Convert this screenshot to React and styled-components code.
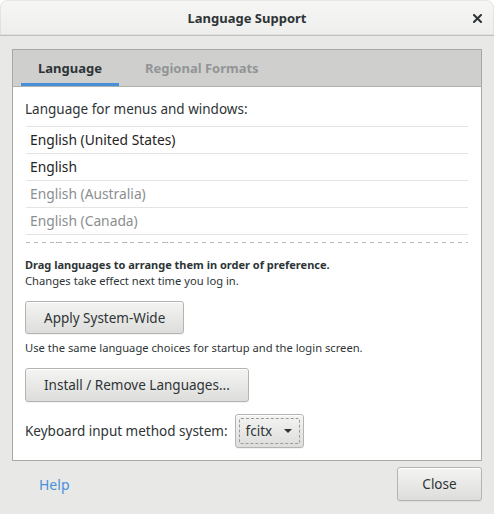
import React from 'react'
import styled, { createGlobalStyle } from 'styled-components'

const text = '#2e3436'
const font = '"Noto Sans", "Open Sans", sans-serif'

const GlobalStyle = createGlobalStyle`
  html, body {
    margin: 0;
    padding: 0;
    background: #ffffff;
  }
  body {
    font-family: ${font};
    color: ${text};
  }
`

const Window = styled.div`
  width: 494px;
  height: 514px;
  box-sizing: border-box;
  display: flex;
  flex-direction: column;
  background: #e8e8e7;
  border-radius: 8px 8px 0 0;
  overflow: hidden;
`

const TitleBar = styled.div`
  position: relative;
  height: 35px;
  flex: 0 0 35px;
  display: flex;
  align-items: center;
  justify-content: center;
  background: linear-gradient(#f6f6f5, #eeeeec);
  border-bottom: 1px solid #c0c0bd;
  border-radius: 8px 8px 0 0;
  box-shadow: inset 0 0 0 1px rgba(0, 0, 0, 0.06);
`

const Title = styled.div`
  font-size: 13px;
  font-weight: 700;
  color: ${text};
`

const CloseX = styled.button`
  position: absolute;
  right: 9px;
  top: 10px;
  width: 16px;
  height: 16px;
  padding: 0;
  border: none;
  background: none;
  display: flex;
  align-items: center;
  justify-content: center;
`

const Body = styled.div`
  flex: 1;
  display: flex;
  flex-direction: column;
  padding: 13px 12px 12px 12px;
`

const Notebook = styled.div`
  flex: 0 0 auto;
  border: 1px solid #a8a8a5;
  background: #ffffff;
  display: flex;
  flex-direction: column;
`

const TabBar = styled.div`
  height: 36px;
  display: flex;
  gap: 8px;
  padding: 0 8px;
  background: #cfcfcd;
  border-bottom: 1px solid #b0b0ad;
`

const Tab = styled.div`
  display: flex;
  align-items: center;
  padding: 0 ${p => (p.$active ? 17 : 18)}px;
  font-size: 13px;
  font-weight: 700;
  color: ${p => (p.$active ? text : '#929595')};
  box-shadow: ${p => (p.$active ? 'inset 0 -3px 0 #4a90d9' : 'none')};
`

const Content = styled.div`
  height: 373px;
  box-sizing: border-box;
  padding: 13px 13px 12px 12px;
  display: flex;
  flex-direction: column;
  align-items: flex-start;
`

const Label = styled.div`
  font-size: 13.5px;
  line-height: 18px;
  color: ${text};
`

const ListView = styled.div`
  position: relative;
  align-self: stretch;
  margin: 8px 0 0 1px;
  height: 117px;
  overflow: hidden;
  border-top: 1px solid #e4e4e2;
  &::after {
    content: '';
    position: absolute;
    left: 0;
    right: 0;
    bottom: 0;
    height: 1px;
    background: repeating-linear-gradient(90deg, #b8b8b6 0 4px, transparent 4px 8px);
  }
`

const Row = styled.div`
  box-sizing: content-box;
  height: 24px;
  display: flex;
  align-items: center;
  padding: 0 0 2px 4px;
  font-size: 13.8px;
  border-bottom: 1px solid #e4e4e2;
  color: ${p => (p.$dim ? '#8b8e8f' : '#1f2324')};
`

const Hint = styled.div`
  font-size: ${p => (p.$bold ? 11 : 11.2)}px;
  line-height: 16px;
  font-weight: ${p => (p.$bold ? 700 : 400)};
  margin-top: ${p => p.$top || 0}px;
  color: ${text};
`

const Button = styled.button`
  height: 34px;
  box-sizing: border-box;
  padding: 0 18px;
  margin-top: ${p => p.$top || 0}px;
  font-family: ${font};
  font-size: 13.5px;
  color: ${text};
  border: 1px solid #b4b4b1;
  border-radius: 3px;
  background: linear-gradient(#f4f4f3, #dddddb);
  box-shadow: inset 0 1px 0 #ffffff, 0 1px 0 rgba(0, 0, 0, 0.05);
  cursor: pointer;
`

const CloseButton = styled(Button)`
  width: 85px;
`

const KeyboardRow = styled.div`
  margin-top: 12px;
  display: flex;
  align-items: center;
  gap: 7px;
`

const Combo = styled(Button)`
  position: relative;
  display: flex;
  align-items: center;
  gap: 12px;
  padding: 0 11px 0 10px;
  &::after {
    content: '';
    position: absolute;
    inset: 3px;
    border: 1px dashed #9a9a98;
    border-radius: 2px;
  }
`

const Arrow = styled.span`
  width: 0;
  height: 0;
  border-left: 4px solid transparent;
  border-right: 4px solid transparent;
  border-top: 4px solid ${text};
`

const Footer = styled.div`
  display: flex;
  align-items: center;
  justify-content: space-between;
  padding: 6px 0 0 27px;
`

const HelpLink = styled.a`
  font-size: 14px;
  color: #4a90d9;
  text-decoration: none;
`

const languages = [
  { name: 'English (United States)' },
  { name: 'English' },
  { name: 'English (Australia)', dim: true },
  { name: 'English (Canada)', dim: true },
  { name: 'English (United Kingdom)', dim: true },
]

export default function App() {
  return (
    <>
      <GlobalStyle />
      <Window>
        <TitleBar>
          <Title>Language Support</Title>
          <CloseX aria-label="Close">
            <svg width="9" height="9" viewBox="0 0 9 9">
              <path d="M1 1 L8 8 M8 1 L1 8" stroke={text} strokeWidth="2" strokeLinecap="square" />
            </svg>
          </CloseX>
        </TitleBar>
        <Body>
          <Notebook>
            <TabBar>
              <Tab $active>Language</Tab>
              <Tab>Regional Formats</Tab>
            </TabBar>
            <Content>
              <Label>Language for menus and windows:</Label>
              <ListView>
                {languages.map(l => (
                  <Row key={l.name} $dim={l.dim}>{l.name}</Row>
                ))}
              </ListView>
              <Hint $bold $top={14}>Drag languages to arrange them in order of preference.</Hint>
              <Hint>Changes take effect next time you log in.</Hint>
              <Button $top={12}>Apply System-Wide</Button>
              <Hint $top={6}>Use the same language choices for startup and the login screen.</Hint>
              <Button $top={12}>Install / Remove Languages...</Button>
              <KeyboardRow>
                <Label>Keyboard input method system:</Label>
                <Combo>
                  fcitx
                  <Arrow />
                </Combo>
              </KeyboardRow>
            </Content>
          </Notebook>
          <Footer>
            <HelpLink href="#">Help</HelpLink>
            <CloseButton>Close</CloseButton>
          </Footer>
        </Body>
      </Window>
    </>
  )
}
